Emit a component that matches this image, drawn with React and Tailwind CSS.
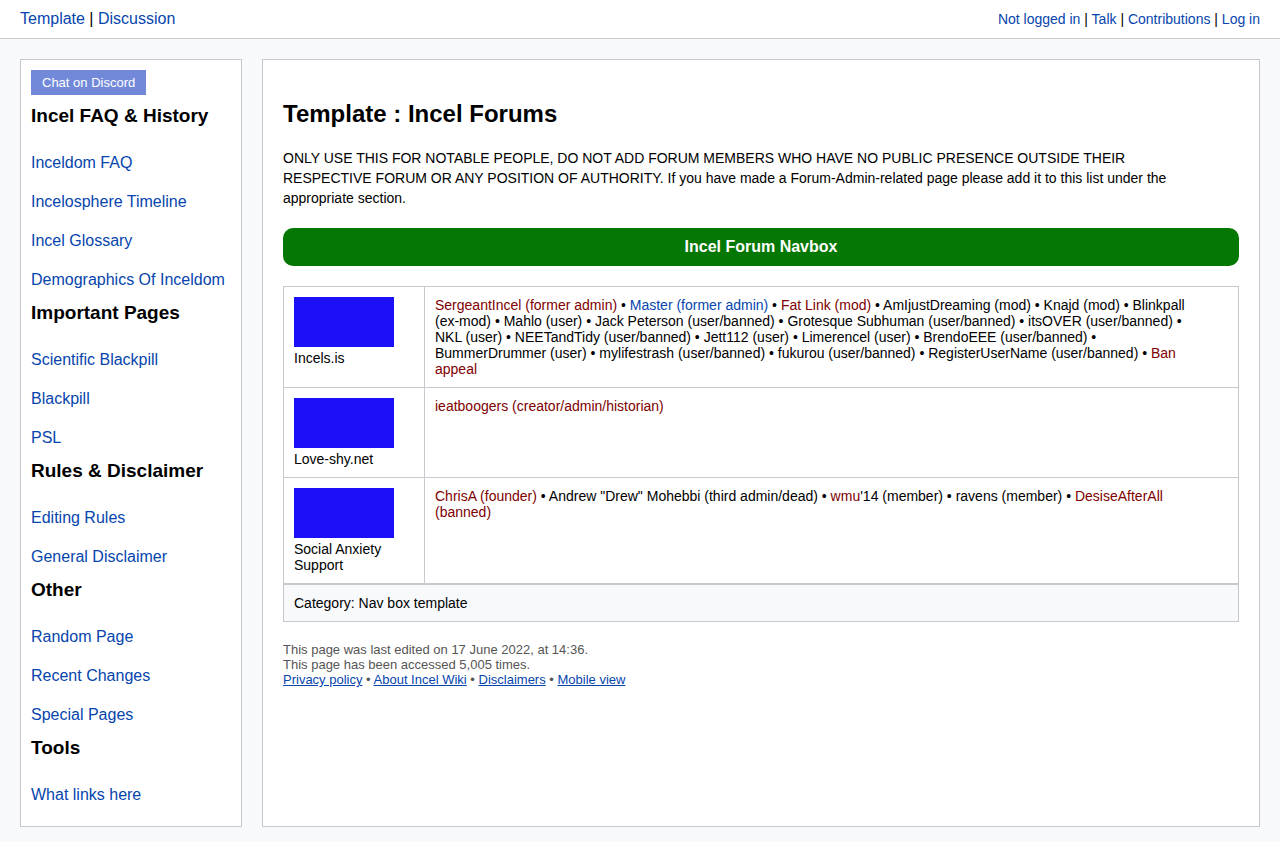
import React from "react";

const sections = [
  {
    title: "Incel FAQ & History",
    links: ["Inceldom FAQ", "Incelosphere Timeline", "Incel Glossary", "Demographics Of Inceldom"],
  },
  { title: "Important Pages", links: ["Scientific Blackpill", "Blackpill", "PSL"] },
  { title: "Rules & Disclaimer", links: ["Editing Rules", "General Disclaimer"] },
  { title: "Other", links: ["Random Page", "Recent Changes", "Special Pages"] },
  { title: "Tools", links: ["What links here"] },
];

const forums = [
  {
    name: "Incels.is",
    members: [
      { missing: "SergeantIncel (former admin)" },
      { link: "Master (former admin)" },
      { missing: "Fat Link (mod)" },
      {
        text: "AmIjustDreaming (mod) • Knajd (mod) • Blinkpall (ex-mod) • Mahlo (user) • Jack Peterson (user/banned) • Grotesque Subhuman (user/banned) • itsOVER (user/banned) • NKL (user) • NEETandTidy (user/banned) • Jett112 (user) • Limerencel (user) • BrendoEEE (user/banned) • BummerDrummer (user) • mylifestrash (user/banned) • fukurou (user/banned) • RegisterUserName (user/banned)",
      },
      { missing: "Ban appeal" },
    ],
  },
  { name: "Love-shy.net", members: [{ missing: "ieatboogers (creator/admin/historian)" }] },
  {
    name: "Social Anxiety Support",
    members: [
      { missing: "ChrisA (founder)" },
      { text: 'Andrew "Drew" Mohebbi (third admin/dead)' },
      { missing: "wmu", text: "'14 (member) • ravens (member)" },
      { missing: "DesiseAfterAll (banned)" },
    ],
  },
];

function LinkRow({ items, separator, className }) {
  return items.map((item, i) => (
    <React.Fragment key={item}>
      {i > 0 && ` ${separator} `}
      <a href="#" className={className}>{item}</a>
    </React.Fragment>
  ));
}

function Members({ members }) {
  return members.map((m, i) => (
    <React.Fragment key={i}>
      {i > 0 && " • "}
      {m.link && <a href="#" className="text-[#0645ad]">{m.link}</a>}
      {m.missing && <a href="#" className="text-[#800000]">{m.missing}</a>}
      {m.text}
    </React.Fragment>
  ));
}

export default function App() {
  return (
    <div className="flex min-h-screen flex-col bg-[#f8f9fb] font-['Liberation_Sans',Arial,sans-serif] text-base text-black">
      <header className="flex items-center justify-between border-b border-[#c8c9cf] bg-white px-5 py-[10px] leading-[18px]">
        <nav aria-label="Page">
          <LinkRow items={["Template", "Discussion"]} separator="|" className="text-[#0645ad]" />
        </nav>
        <nav aria-label="Account" className="text-sm leading-[18px]">
          <LinkRow items={["Not logged in", "Talk", "Contributions", "Log in"]} separator="|" className="text-[#0645ad]" />
        </nav>
      </header>

      <div className="flex grow items-stretch gap-5 px-5 pt-5 pb-[15px]">
        <aside className="w-[222px] shrink-0 border border-[#c8c9cf] bg-white p-[10px]">
          <button type="button" className="block bg-[#7289da] px-[11px] py-[5px] text-[13px] leading-[15px] text-white">
            Chat on Discord
          </button>
          <nav aria-label="Sidebar" className="flex flex-col gap-[13px] pt-[10px] pb-3">
            {sections.map((s) => (
              <section key={s.title}>
                <h3 className="mb-7 text-[19px] leading-[21px] font-bold">{s.title}</h3>
                <ul className="flex flex-col gap-[21px] leading-[18px]">
                  {s.links.map((l) => (
                    <li key={l}>
                      <a href="#" className="block text-[#0645ad]">{l}</a>
                    </li>
                  ))}
                </ul>
              </section>
            ))}
          </nav>
        </aside>

        <main className="min-w-0 grow border border-[#c8c9cf] bg-white p-5">
          <h2 className="mt-5 mb-5 text-2xl leading-7 font-bold">Template : Incel Forums</h2>
          <p className="mb-5 pr-10 text-sm leading-5">
            ONLY USE THIS FOR NOTABLE PEOPLE, DO NOT ADD FORUM MEMBERS WHO HAVE NO PUBLIC PRESENCE OUTSIDE THEIR
            RESPECTIVE FORUM OR ANY POSITION OF AUTHORITY. If you have made a Forum-Admin-related page please add it to
            this list under the appropriate section.
          </p>
          <div className="mb-5 rounded-[10px] bg-[#057703] p-[10px] text-center leading-[18px] font-bold text-white">
            Incel Forum Navbox
          </div>
          <table className="w-full border-collapse text-sm leading-4">
            <tbody>
              {forums.map((f) => (
                <tr key={f.name}>
                  <th scope="row" className="w-[141px] border border-[#c8c9cf] p-[10px] text-left align-top font-normal">
                    <div className="mb-[3px] h-[50px] w-[100px] bg-[#1b0ff7]" />
                    {f.name}
                  </th>
                  <td className="border border-[#c8c9cf] py-[10px] pr-10 pl-[10px] align-top">
                    <Members members={f.members} />
                  </td>
                </tr>
              ))}
            </tbody>
          </table>
          <div className="border border-[#c8c9cf] bg-[#f8f9fb] p-[10px] text-sm leading-4">
            Category: Nav box template
          </div>
          <footer className="mt-5 text-[13px] leading-[15px] text-[#555555]">
            <p>This page was last edited on 17 June 2022, at 14:36.</p>
            <p>This page has been accessed 5,005 times.</p>
            <p>
              <LinkRow
                items={["Privacy policy", "About Incel Wiki", "Disclaimers", "Mobile view"]}
                separator="•"
                className="text-[#0645ad] underline"
              />
            </p>
          </footer>
        </main>
      </div>
    </div>
  );
}
